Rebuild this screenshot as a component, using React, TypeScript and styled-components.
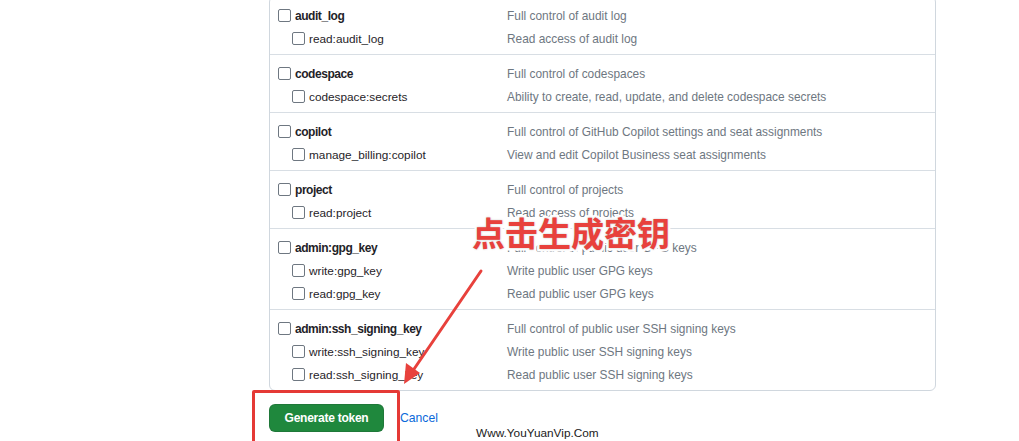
import React from "react";
import styled, { createGlobalStyle } from "styled-components";

const Global = createGlobalStyle`
  html, body { margin: 0; padding: 0; background: #fff; }
  body { font-family: "Liberation Sans", Arial, sans-serif; overflow: hidden; }
`;

const Page = styled.div`
  position: relative;
  width: 1019px;
  height: 441px;
  overflow: hidden;
`;

const Form = styled.div`
  margin-left: 269px;
  margin-top: -4px;
  width: 667px;
`;

const ScopeBox = styled.div`
  border: 1px solid #d0d7de;
  border-radius: 6px;
`;

const Group = styled.div<{ $first?: boolean }>`
  padding: 7px 0 4px 8px;
  border-top: ${(p) => (p.$first ? "none" : "1px solid #d8dee4")};
`;

const Row = styled.div`
  display: grid;
  grid-template-columns: 229px 1fr;
  height: 23px;
  align-items: center;
`;

const Label = styled.label<{ $child?: boolean }>`
  display: flex;
  align-items: center;
  gap: 4px;
  padding-left: ${(p) => (p.$child ? 14 : 0)}px;
  font-size: ${(p) => (p.$child ? "11.8px" : "12px")};
  letter-spacing: ${(p) => (p.$child ? "0" : "-0.45px")};
  color: #1f2328;
  font-weight: ${(p) => (p.$child ? 400 : 700)};
  white-space: nowrap;
`;

const Box = styled.span`
  width: 11px;
  height: 11px;
  border: 1px solid #6e7781;
  border-radius: 2px;
  background: #fff;
  flex: none;
  margin-right: 0;
`;

const Desc = styled.span`
  font-size: 11.9px;
  color: #6e7781;
  white-space: nowrap;
`;

const Actions = styled.div`
  display: flex;
  align-items: center;
  gap: 16px;
  margin-top: 13px;
`;

const Button = styled.button`
  width: 115px;
  height: 28px;
  border: 1px solid rgba(31, 35, 40, 0.15);
  border-radius: 6px;
  background: #1f883d;
  color: #fff;
  font-family: "Liberation Sans", Arial, sans-serif;
  font-weight: 700;
  font-size: 12px;
  letter-spacing: -0.25px;
  padding: 0;
`;

const CancelLink = styled.a`
  color: #0969da;
  font-size: 12.2px;
  text-decoration: none;
`;

const Callout = styled.div`
  position: absolute;
  left: 472px;
  top: 212px;
  font-family: "Noto Sans CJK SC", sans-serif;
  font-weight: 700;
  font-size: 33px;
  line-height: 40px;
  color: #e8413c;
  -webkit-text-stroke: 5px #fff;
  paint-order: stroke fill;
  text-shadow: 0 0 2px rgba(0, 0, 0, 0.25);
`;

const HighlightRect = styled.div`
  position: absolute;
  left: 252px;
  top: 390px;
  width: 142px;
  height: 70px;
  border: 3px solid #e53935;
  border-radius: 2px;
`;

const ArrowSvg = styled.svg`
  position: absolute;
  left: 0;
  top: 0;
  pointer-events: none;
`;

const Watermark = styled.div`
  position: absolute;
  left: 476px;
  top: 426px;
  font-family: "Liberation Sans", Arial, sans-serif;
  font-size: 11.8px;
  color: #1a1a1a;
`;

type Scope = { name: string; desc: string; children: { name: string; desc: string }[] };

const scopes: Scope[] = [
  { name: "audit_log", desc: "Full control of audit log", children: [{ name: "read:audit_log", desc: "Read access of audit log" }] },
  { name: "codespace", desc: "Full control of codespaces", children: [{ name: "codespace:secrets", desc: "Ability to create, read, update, and delete codespace secrets" }] },
  { name: "copilot", desc: "Full control of GitHub Copilot settings and seat assignments", children: [{ name: "manage_billing:copilot", desc: "View and edit Copilot Business seat assignments" }] },
  { name: "project", desc: "Full control of projects", children: [{ name: "read:project", desc: "Read access of projects" }] },
  {
    name: "admin:gpg_key",
    desc: "Full control of public user GPG keys",
    children: [
      { name: "write:gpg_key", desc: "Write public user GPG keys" },
      { name: "read:gpg_key", desc: "Read public user GPG keys" },
    ],
  },
  {
    name: "admin:ssh_signing_key",
    desc: "Full control of public user SSH signing keys",
    children: [
      { name: "write:ssh_signing_key", desc: "Write public user SSH signing keys" },
      { name: "read:ssh_signing_key", desc: "Read public user SSH signing keys" },
    ],
  },
];

export default function App() {
  return (
    <Page>
      <Global />
      <Form>
        <ScopeBox>
          {scopes.map((s, i) => (
            <Group key={s.name} $first={i === 0}>
              <Row>
                <Label>
                  <Box />
                  {s.name}
                </Label>
                <Desc>{s.desc}</Desc>
              </Row>
              {s.children.map((c) => (
                <Row key={c.name}>
                  <Label $child>
                    <Box />
                    {c.name}
                  </Label>
                  <Desc>{c.desc}</Desc>
                </Row>
              ))}
            </Group>
          ))}
        </ScopeBox>
        <Actions>
          <Button>Generate token</Button>
          <CancelLink href="#">Cancel</CancelLink>
        </Actions>
      </Form>
      <Callout>点击生成密钥</Callout>
      <ArrowSvg width="1019" height="441" viewBox="0 0 1019 441">
        <line x1="481" y1="271" x2="412" y2="372" stroke="#e8413c" strokeWidth="3" strokeLinecap="round" />
        <polygon points="404,384 406,363 420,373" fill="#e8413c" />
      </ArrowSvg>
      <HighlightRect />
      <Watermark>Www.YouYuanVip.Com</Watermark>
    </Page>
  );
}
